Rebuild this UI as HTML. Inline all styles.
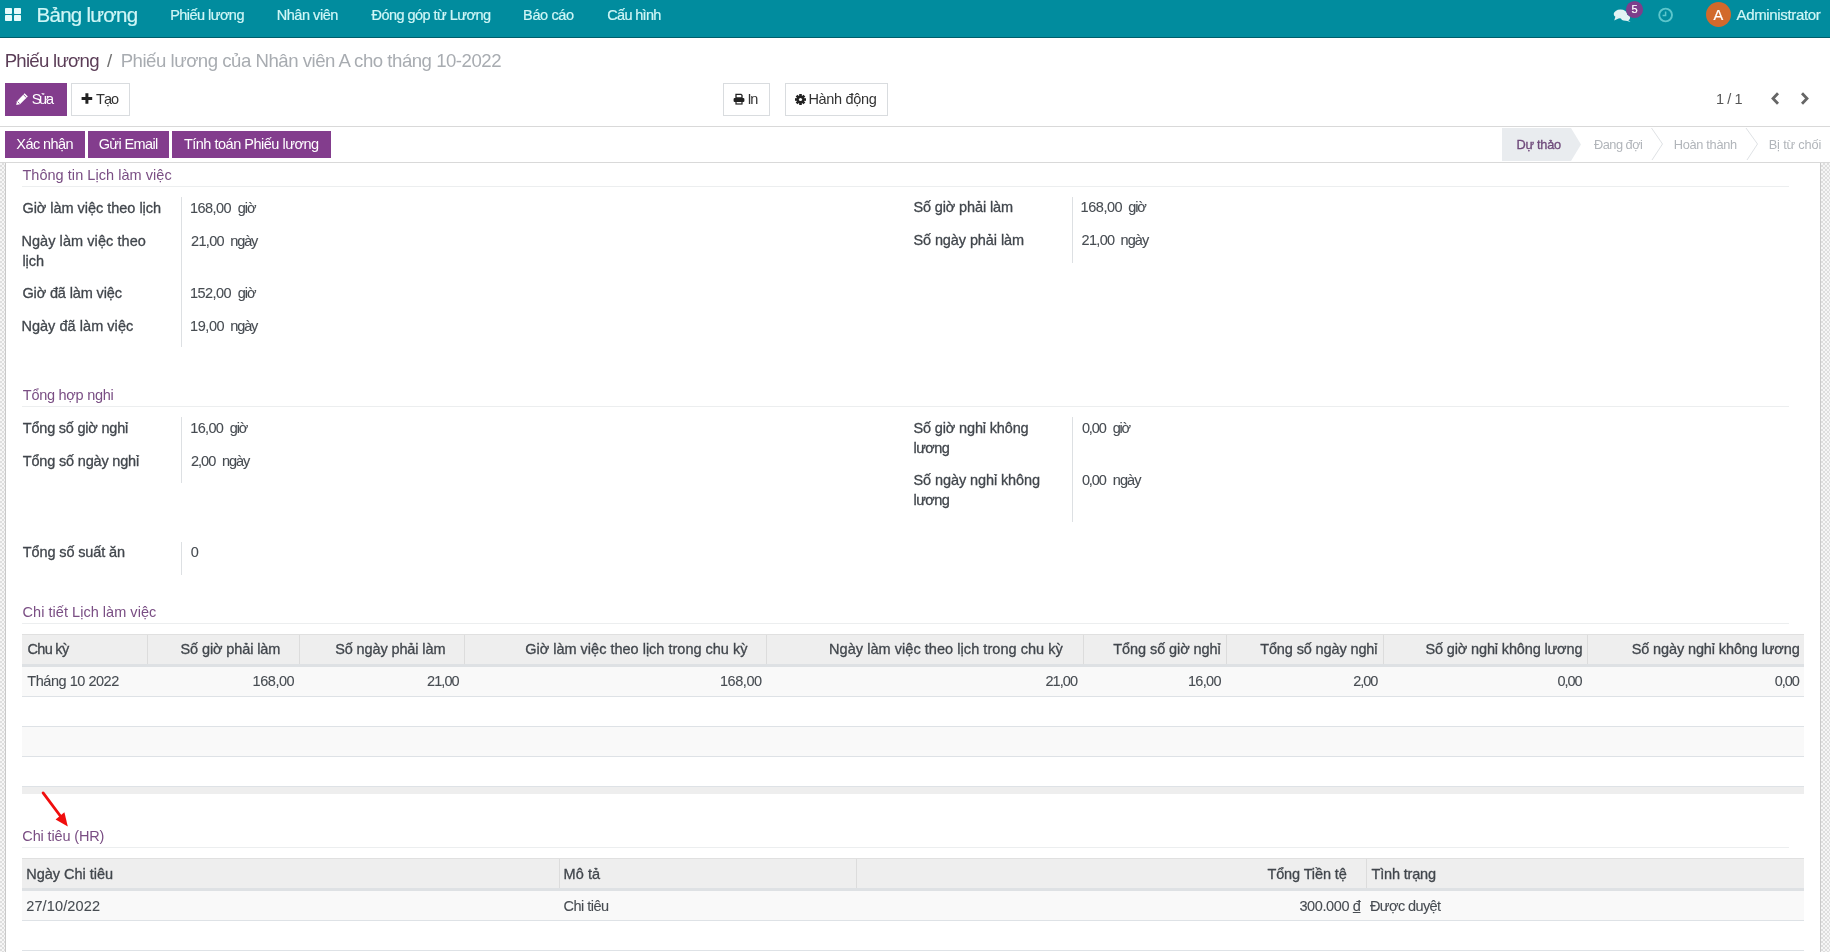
<!DOCTYPE html>
<html><head><meta charset="utf-8">
<style>
*{box-sizing:border-box;margin:0;padding:0}
html,body{width:1830px;height:952px;overflow:hidden;background:#fff;font-family:"Liberation Sans",sans-serif;font-size:14.5px;color:#4c5157}
div,svg{position:absolute}
.t,.nav,.val,.med{white-space:nowrap}
.nav{-webkit-text-stroke:0.2px currentColor}
.val{color:#474c52;-webkit-text-stroke:0.1px currentColor}
.med{color:#41464c;-webkit-text-stroke:0.3px currentColor}
.s{position:absolute}

</style></head><body>
<!-- navbar -->
<div class="s" style="left:0;top:0;width:1830px;height:38px;background:#018c9e;border-bottom:1px solid #005e6b"></div>
<svg style="left:5px;top:8px" width="16" height="13" viewBox="0 0 16 13"><g fill="#e6fbfb"><rect x="0" y="0" width="7" height="6" rx="0.7"/><rect x="9" y="0" width="7" height="6" rx="0.7"/><rect x="0" y="7" width="7" height="6" rx="0.7"/><rect x="9" y="7" width="7" height="6" rx="0.7"/></g></svg>
<svg style="left:1612px;top:0px" width="36" height="24" viewBox="0 0 36 24">
  <g fill="#e3f3f4">
    <ellipse cx="8.5" cy="14" rx="6.8" ry="4.4"/>
    <path d="M3.5 16.5 L2.2 20.5 L7.5 18 Z"/>
    <ellipse cx="13.5" cy="17.8" rx="4.6" ry="3"/>
    <path d="M15.5 19.5 L18.5 22 L13.5 20.5 Z"/>
  </g>
  <circle cx="22.5" cy="9.5" r="8.6" fill="#7d3e8b"/>
</svg>
<svg style="left:1657px;top:7px" width="17" height="17" viewBox="0 0 17 17">
  <circle cx="8.6" cy="8" r="6.4" fill="none" stroke="#5cc6cc" stroke-width="1.9"/>
  <path d="M8.6 4.6 V8.6 H5.6" fill="none" stroke="#5cc6cc" stroke-width="1.5"/>
</svg>
<div class="s" style="left:1705.5px;top:2.3px;width:25px;height:25px;border-radius:50%;background:#d2692b"></div>

<!-- toolbar buttons -->
<div class="s" style="left:5px;top:83px;width:62px;height:33px;background:#833d8d"></div>
<svg style="left:15px;top:92px" width="14" height="14" viewBox="0 0 14 14">
  <path d="M9.6 1.2 L12.8 4.4 L5 12.2 L1.2 13 L2 9.2 Z" fill="#fff"/>
  <path d="M8.3 2.5 L11.5 5.7" stroke="#833d8d" stroke-width="0.9"/>
  <path d="M2.6 9.6 L4.6 11.6" stroke="#833d8d" stroke-width="0.8"/>
</svg>
<div class="s" style="left:71px;top:83px;width:59px;height:33px;background:#fff;border:1px solid #d9dcdf"></div>
<svg style="left:81px;top:93px" width="12" height="11" viewBox="0 0 12 11">
  <path d="M4.4 0.3 H7.4 V4 H11.2 V7 H7.4 V10.7 H4.4 V7 H0.6 V4 H4.4 Z" fill="#222"/>
</svg>
<div class="s" style="left:723px;top:83px;width:47px;height:33px;background:#fff;border:1px solid #d9dcdf"></div>
<svg style="left:733px;top:93px" width="12" height="12" viewBox="0 0 12 12">
  <path d="M3 1.3 H8 L9 2.3 V5 H3 Z" fill="none" stroke="#222" stroke-width="1.3"/>
  <rect x="0.6" y="5" width="10.8" height="4" rx="1" fill="#222"/>
  <rect x="3" y="8.2" width="6" height="2.8" fill="none" stroke="#222" stroke-width="1.2"/>
</svg>
<div class="s" style="left:785px;top:83px;width:103px;height:33px;background:#fff;border:1px solid #d9dcdf"></div>
<svg style="left:795px;top:94px" width="11" height="11" viewBox="0 0 11 11">
  <g fill="#222" transform="translate(5.5 5.5)">
    <circle r="3.9"/>
    <rect x="-1.3" y="-5.5" width="2.6" height="11"/>
    <rect x="-1.3" y="-5.5" width="2.6" height="11" transform="rotate(45)"/>
    <rect x="-1.3" y="-5.5" width="2.6" height="11" transform="rotate(90)"/>
    <rect x="-1.3" y="-5.5" width="2.6" height="11" transform="rotate(135)"/>
  </g>
  <circle cx="5.5" cy="5.5" r="1.6" fill="#fff"/>
</svg>
<svg style="left:1768px;top:90px" width="44" height="17" viewBox="0 0 44 17">
  <path d="M10 3.2 L5 8.5 L10 13.8" fill="none" stroke="#666" stroke-width="2.8"/>
  <path d="M34 3.2 L39 8.5 L34 13.8" fill="none" stroke="#666" stroke-width="2.8"/>
</svg>

<div class="s" style="left:0;top:126px;width:1830px;height:1px;background:#d9d9d9"></div>
<div class="s" style="left:5px;top:131px;width:80px;height:27px;background:#833d8d"></div>
<div class="s" style="left:88px;top:131px;width:81px;height:27px;background:#833d8d"></div>
<div class="s" style="left:172px;top:131px;width:159px;height:27px;background:#833d8d"></div>
<svg style="left:1500px;top:127px" width="330" height="35" viewBox="0 0 330 35">
  <path d="M2 1 H71 L81 17.5 L71 34 H2 Z" fill="#e9ecef"/>
  <path d="M151.5 1 L162.5 17 L152 33" fill="none" stroke="#dfe2e5" stroke-width="1"/>
  <path d="M246 1 L257.5 17 L247 33" fill="none" stroke="#dfe2e5" stroke-width="1"/>
</svg>
<div class="s" style="left:0;top:162px;width:1830px;height:1px;background:#d9d9d9"></div>

<!-- sheet bg -->
<div class="s" style="left:0;top:163px;width:5px;height:789px;background:conic-gradient(#dedede 25%,#f6f6f6 0 50%,#dedede 0 75%,#f6f6f6 0) 0 0/4px 4px"></div>
<div class="s" style="left:1821px;top:163px;width:9px;height:789px;background:conic-gradient(#dedede 25%,#f6f6f6 0 50%,#dedede 0 75%,#f6f6f6 0) 0 0/4px 4px"></div>
<div class="s" style="left:5px;top:163px;width:1px;height:789px;background:#c9c9c9"></div>
<div class="s" style="left:1820px;top:163px;width:1px;height:789px;background:#c9c9c9"></div>

<!-- separators -->
<div class="s" style="left:22px;top:186px;width:1767px;height:1px;background:#eceeef"></div>
<div class="s" style="left:22px;top:406px;width:1767px;height:1px;background:#eceeef"></div>
<div class="s" style="left:22px;top:623px;width:1767px;height:1px;background:#eceeef"></div>
<div class="s" style="left:22px;top:847px;width:1767px;height:1px;background:#eceeef"></div>

<!-- field vertical borders -->
<div class="s" style="left:181px;top:197px;width:1px;height:150px;background:#dde0e3"></div>
<div class="s" style="left:1072px;top:197px;width:1px;height:66px;background:#dde0e3"></div>
<div class="s" style="left:181px;top:417px;width:1px;height:66px;background:#dde0e3"></div>
<div class="s" style="left:1072px;top:417px;width:1px;height:105px;background:#dde0e3"></div>
<div class="s" style="left:181px;top:542px;width:1px;height:33px;background:#dde0e3"></div>

<!-- table 1 -->
<div class="s" style="left:22px;top:634px;width:1782px;height:33px;background:#eeeeee;border-top:1px solid #e0e0e0;border-bottom:3px solid #dee1e4"></div>
<div class="s" style="left:147px;top:635px;width:1px;height:29px;background:#dcdcdc"></div>
<div class="s" style="left:299px;top:635px;width:1px;height:29px;background:#dcdcdc"></div>
<div class="s" style="left:464px;top:635px;width:1px;height:29px;background:#dcdcdc"></div>
<div class="s" style="left:766px;top:635px;width:1px;height:29px;background:#dcdcdc"></div>
<div class="s" style="left:1083px;top:635px;width:1px;height:29px;background:#dcdcdc"></div>
<div class="s" style="left:1226px;top:635px;width:1px;height:29px;background:#dcdcdc"></div>
<div class="s" style="left:1383px;top:635px;width:1px;height:29px;background:#dcdcdc"></div>
<div class="s" style="left:1587px;top:635px;width:1px;height:29px;background:#dcdcdc"></div>
<div class="s" style="left:22px;top:667px;width:1782px;height:29px;background:#f9f9f9"></div>
<div class="s" style="left:22px;top:696px;width:1782px;height:1px;background:#dee2e6"></div>
<div class="s" style="left:22px;top:726px;width:1782px;height:1px;background:#dee2e6"></div>
<div class="s" style="left:22px;top:727px;width:1782px;height:29px;background:#f9f9f9"></div>
<div class="s" style="left:22px;top:756px;width:1782px;height:1px;background:#dee2e6"></div>
<div class="s" style="left:22px;top:786px;width:1782px;height:8px;background:#eeeeee;border-top:1px solid #dee2e6"></div>

<!-- red arrow -->
<svg style="left:38px;top:788px" width="36" height="42" viewBox="0 0 36 42">
  <path d="M5.1 4.9 L23.5 29.5" stroke="#f00d0d" stroke-width="2.8" stroke-linecap="round" fill="none"/>
  <path d="M29.8 38.6 L17.6 31.4 L26.4 24.2 Z" fill="#f00d0d"/>
</svg>

<!-- table 2 -->
<div class="s" style="left:22px;top:858px;width:1782px;height:33px;background:#eeeeee;border-top:1px solid #e0e0e0;border-bottom:3px solid #dee1e4"></div>
<div class="s" style="left:559px;top:859px;width:1px;height:29px;background:#dcdcdc"></div>
<div class="s" style="left:856px;top:859px;width:1px;height:29px;background:#dcdcdc"></div>
<div class="s" style="left:1366px;top:859px;width:1px;height:29px;background:#dcdcdc"></div>
<div class="s" style="left:22px;top:891px;width:1782px;height:29px;background:#f9f9f9"></div>
<div class="s" style="left:22px;top:920px;width:1782px;height:1px;background:#dee2e6"></div>
<div class="s" style="left:22px;top:950px;width:1782px;height:1px;background:#dee2e6"></div>

<div id="tx" style="left:0;top:0;width:1830px;height:952px;will-change:transform">
<div class="nav" style="left:36.60px;top:0.30px;font-size:20.5px;line-height:29px;letter-spacing:-0.733px;color:#cff6f6;">Bảng lương</div>
<div class="nav" style="left:170.20px;top:4.68px;font-size:14.5px;line-height:20px;letter-spacing:-0.541px;color:#cff6f6;">Phiếu lương</div>
<div class="nav" style="left:276.70px;top:4.68px;font-size:14.5px;line-height:20px;letter-spacing:-0.454px;color:#cff6f6;">Nhân viên</div>
<div class="nav" style="left:371.50px;top:4.68px;font-size:14.5px;line-height:20px;letter-spacing:-0.533px;color:#cff6f6;">Đóng góp từ Lương</div>
<div class="nav" style="left:523.10px;top:4.68px;font-size:14.5px;line-height:20px;letter-spacing:-0.374px;color:#cff6f6;">Báo cáo</div>
<div class="nav" style="left:607.20px;top:4.68px;font-size:14.5px;line-height:20px;letter-spacing:-0.669px;color:#cff6f6;">Cấu hình</div>
<div class="nav" style="left:1736.60px;top:4.20px;font-size:15px;line-height:21px;letter-spacing:-0.355px;color:#cff6f6;">Administrator</div>
<div class="nav" style="left:1713.50px;top:4.88px;font-size:14.5px;line-height:20px;color:#fff;">A</div>
<div class="nav" style="left:1631.50px;top:2.29px;font-size:11px;line-height:15px;color:#fff;">5</div>
<div class="t" style="left:4.70px;top:48.36px;font-size:18.6px;line-height:26px;letter-spacing:-0.733px;color:#5b3d57;">Phiếu lương</div>
<div class="t" style="left:107.00px;top:48.36px;font-size:18.6px;line-height:26px;color:#707070;">/</div>
<div class="t" style="left:120.70px;top:48.36px;font-size:18.6px;line-height:26px;letter-spacing:-0.481px;color:#a8acb1;">Phiếu lương của Nhân viên A cho tháng 10-2022</div>
<div class="t" style="left:31.80px;top:89.08px;font-size:14.5px;line-height:20px;letter-spacing:-2.539px;color:#fff;">Sửa</div>
<div class="t" style="left:96.00px;top:88.98px;font-size:14.5px;line-height:20px;letter-spacing:-0.961px;color:#333;">Tạo</div>
<div class="t" style="left:747.40px;top:88.88px;font-size:14.5px;line-height:20px;letter-spacing:-1.129px;color:#333;">In</div>
<div class="t" style="left:808.40px;top:88.88px;font-size:14.5px;line-height:20px;letter-spacing:-0.323px;color:#333;">Hành động</div>
<div class="t" style="left:1715.90px;top:88.78px;font-size:14.5px;line-height:20px;letter-spacing:-0.387px;color:#555;">1 / 1</div>
<div class="t" style="left:16.30px;top:133.78px;font-size:14.5px;line-height:20px;letter-spacing:-0.572px;color:#fff;">Xác nhận</div>
<div class="t" style="left:98.70px;top:133.78px;font-size:14.5px;line-height:20px;letter-spacing:-0.621px;color:#fff;">Gửi Email</div>
<div class="t" style="left:183.90px;top:133.78px;font-size:14.5px;line-height:20px;letter-spacing:-0.490px;color:#fff;">Tính toán Phiếu lương</div>
<div class="med" style="left:1516.50px;top:135.86px;font-size:12.8px;line-height:18px;letter-spacing:-0.275px;color:#6f4a7b;">Dự thảo</div>
<div class="t" style="left:1594.00px;top:135.86px;font-size:12.8px;line-height:18px;letter-spacing:-0.522px;color:#b1b5ba;">Đang đợi</div>
<div class="t" style="left:1673.75px;top:135.86px;font-size:12.8px;line-height:18px;letter-spacing:-0.312px;color:#b1b5ba;">Hoàn thành</div>
<div class="t" style="left:1768.70px;top:135.86px;font-size:12.8px;line-height:18px;letter-spacing:-0.160px;color:#b1b5ba;">Bị từ chối</div>
<div class="t" style="left:22.40px;top:165.18px;font-size:14.5px;line-height:20px;letter-spacing:0.044px;color:#7a4e84;">Thông tin Lịch làm việc</div>
<div class="t" style="left:22.80px;top:385.28px;font-size:14.5px;line-height:20px;letter-spacing:-0.261px;color:#7a4e84;">Tổng hợp nghi</div>
<div class="t" style="left:22.60px;top:601.78px;font-size:14.5px;line-height:20px;letter-spacing:0.033px;color:#7a4e84;">Chi tiết Lịch làm việc</div>
<div class="t" style="left:22.30px;top:825.68px;font-size:14.5px;line-height:20px;letter-spacing:-0.139px;color:#7a4e84;">Chi tiêu (HR)</div>
<div class="med" style="left:22.40px;top:197.78px;font-size:14.5px;line-height:20px;letter-spacing:-0.028px;">Giờ làm việc theo lịch</div>
<div class="med" style="left:21.40px;top:230.78px;font-size:14.5px;line-height:20px;letter-spacing:0.068px;">Ngày làm việc theo</div>
<div class="med" style="left:22.40px;top:251.38px;font-size:14.5px;line-height:20px;">lịch</div>
<div class="med" style="left:22.40px;top:282.68px;font-size:14.5px;line-height:20px;letter-spacing:-0.130px;">Giờ đã làm việc</div>
<div class="med" style="left:21.40px;top:315.88px;font-size:14.5px;line-height:20px;letter-spacing:0.042px;">Ngày đã làm việc</div>
<div class="val" style="left:190.00px;top:197.78px;font-size:14.5px;line-height:20px;letter-spacing:-0.557px;">168,00</div>
<div class="val" style="left:237.80px;top:197.78px;font-size:14.5px;line-height:20px;letter-spacing:-1.093px;">giờ</div>
<div class="val" style="left:191.00px;top:230.78px;font-size:14.5px;line-height:20px;letter-spacing:-0.655px;">21,00</div>
<div class="val" style="left:230.30px;top:230.78px;font-size:14.5px;line-height:20px;letter-spacing:-1.131px;">ngày</div>
<div class="val" style="left:190.00px;top:282.68px;font-size:14.5px;line-height:20px;letter-spacing:-0.557px;">152,00</div>
<div class="val" style="left:237.80px;top:282.68px;font-size:14.5px;line-height:20px;letter-spacing:-1.093px;">giờ</div>
<div class="val" style="left:190.00px;top:315.88px;font-size:14.5px;line-height:20px;letter-spacing:-0.405px;">19,00</div>
<div class="val" style="left:230.30px;top:315.88px;font-size:14.5px;line-height:20px;letter-spacing:-1.131px;">ngày</div>
<div class="med" style="left:913.40px;top:197.28px;font-size:14.5px;line-height:20px;letter-spacing:-0.123px;">Số giờ phải làm</div>
<div class="med" style="left:913.40px;top:229.68px;font-size:14.5px;line-height:20px;letter-spacing:-0.091px;">Số ngày phải làm</div>
<div class="val" style="left:1080.60px;top:197.28px;font-size:14.5px;line-height:20px;letter-spacing:-0.457px;">168,00</div>
<div class="val" style="left:1128.30px;top:197.28px;font-size:14.5px;line-height:20px;letter-spacing:-1.143px;">giờ</div>
<div class="val" style="left:1081.60px;top:229.68px;font-size:14.5px;line-height:20px;letter-spacing:-0.705px;">21,00</div>
<div class="val" style="left:1120.60px;top:229.68px;font-size:14.5px;line-height:20px;letter-spacing:-0.931px;">ngày</div>
<div class="med" style="left:22.80px;top:417.88px;font-size:14.5px;line-height:20px;letter-spacing:-0.216px;">Tổng số giờ nghỉ</div>
<div class="med" style="left:22.80px;top:450.58px;font-size:14.5px;line-height:20px;letter-spacing:-0.180px;">Tổng số ngày nghỉ</div>
<div class="val" style="left:190.30px;top:417.58px;font-size:14.5px;line-height:20px;letter-spacing:-0.680px;">16,00</div>
<div class="val" style="left:229.80px;top:417.58px;font-size:14.5px;line-height:20px;letter-spacing:-1.193px;">giờ</div>
<div class="val" style="left:191.00px;top:450.68px;font-size:14.5px;line-height:20px;letter-spacing:-0.986px;">2,00</div>
<div class="val" style="left:221.90px;top:450.68px;font-size:14.5px;line-height:20px;letter-spacing:-1.064px;">ngày</div>
<div class="med" style="left:913.50px;top:417.68px;font-size:14.5px;line-height:20px;letter-spacing:-0.148px;">Số giờ nghỉ không</div>
<div class="med" style="left:913.50px;top:438.28px;font-size:14.5px;line-height:20px;letter-spacing:-0.575px;">lương</div>
<div class="med" style="left:913.50px;top:469.58px;font-size:14.5px;line-height:20px;letter-spacing:-0.095px;">Số ngày nghỉ không</div>
<div class="med" style="left:913.50px;top:490.18px;font-size:14.5px;line-height:20px;letter-spacing:-0.575px;">lương</div>
<div class="val" style="left:1081.90px;top:417.68px;font-size:14.5px;line-height:20px;letter-spacing:-1.119px;">0,00</div>
<div class="val" style="left:1112.70px;top:417.68px;font-size:14.5px;line-height:20px;letter-spacing:-1.193px;">giờ</div>
<div class="val" style="left:1081.90px;top:469.58px;font-size:14.5px;line-height:20px;letter-spacing:-1.119px;">0,00</div>
<div class="val" style="left:1112.70px;top:469.58px;font-size:14.5px;line-height:20px;letter-spacing:-0.864px;">ngày</div>
<div class="med" style="left:22.80px;top:542.48px;font-size:14.5px;line-height:20px;letter-spacing:-0.123px;">Tổng số suất ăn</div>
<div class="val" style="left:190.80px;top:542.48px;font-size:14.5px;line-height:20px;">0</div>
<div class="med" style="left:27.60px;top:638.78px;font-size:14.5px;line-height:20px;letter-spacing:-0.716px;">Chu kỳ</div>
<div class="med" style="left:180.50px;top:638.78px;font-size:14.5px;line-height:20px;letter-spacing:-0.108px;">Số giờ phải làm</div>
<div class="med" style="left:335.20px;top:638.78px;font-size:14.5px;line-height:20px;letter-spacing:-0.118px;">Số ngày phải làm</div>
<div class="med" style="left:525.20px;top:638.78px;font-size:14.5px;line-height:20px;">Giờ làm việc theo lịch trong chu kỳ</div>
<div class="med" style="left:829.00px;top:638.78px;font-size:14.5px;line-height:20px;letter-spacing:0.050px;">Ngày làm việc theo lịch trong chu kỳ</div>
<div class="med" style="left:1113.30px;top:638.78px;font-size:14.5px;line-height:20px;letter-spacing:-0.082px;">Tổng số giờ nghỉ</div>
<div class="med" style="left:1260.20px;top:638.78px;font-size:14.5px;line-height:20px;letter-spacing:-0.124px;">Tổng số ngày nghỉ</div>
<div class="med" style="left:1425.50px;top:638.78px;font-size:14.5px;line-height:20px;letter-spacing:-0.144px;">Số giờ nghỉ không lương</div>
<div class="med" style="left:1631.70px;top:638.78px;font-size:14.5px;line-height:20px;letter-spacing:-0.118px;">Số ngày nghỉ không lương</div>
<div class="val" style="left:27.30px;top:670.58px;font-size:14.5px;line-height:20px;letter-spacing:-0.466px;">Tháng 10 2022</div>
<div class="val" style="left:252.60px;top:670.58px;font-size:14.5px;line-height:20px;letter-spacing:-0.457px;">168,00</div>
<div class="val" style="left:427.00px;top:670.58px;font-size:14.5px;line-height:20px;letter-spacing:-0.905px;">21,00</div>
<div class="val" style="left:720.00px;top:670.58px;font-size:14.5px;line-height:20px;letter-spacing:-0.457px;">168,00</div>
<div class="val" style="left:1045.40px;top:670.58px;font-size:14.5px;line-height:20px;letter-spacing:-0.905px;">21,00</div>
<div class="val" style="left:1187.90px;top:670.58px;font-size:14.5px;line-height:20px;letter-spacing:-0.655px;">16,00</div>
<div class="val" style="left:1353.30px;top:670.58px;font-size:14.5px;line-height:20px;letter-spacing:-1.052px;">2,00</div>
<div class="val" style="left:1557.40px;top:670.58px;font-size:14.5px;line-height:20px;letter-spacing:-1.052px;">0,00</div>
<div class="val" style="left:1774.70px;top:670.58px;font-size:14.5px;line-height:20px;letter-spacing:-1.052px;">0,00</div>
<div class="med" style="left:26.20px;top:863.58px;font-size:14.5px;line-height:20px;letter-spacing:-0.015px;">Ngày Chi tiêu</div>
<div class="med" style="left:563.50px;top:863.58px;font-size:14.5px;line-height:20px;letter-spacing:0.075px;">Mô tả</div>
<div class="med" style="left:1267.40px;top:863.58px;font-size:14.5px;line-height:20px;letter-spacing:-0.109px;">Tổng Tiền tệ</div>
<div class="med" style="left:1371.50px;top:863.58px;font-size:14.5px;line-height:20px;letter-spacing:-0.170px;">Tình trạng</div>
<div class="val" style="left:26.20px;top:895.58px;font-size:14.5px;line-height:20px;letter-spacing:0.144px;">27/10/2022</div>
<div class="val" style="left:563.60px;top:895.58px;font-size:14.5px;line-height:20px;letter-spacing:-0.514px;">Chi tiêu</div>
<div class="val" style="left:1299.40px;top:895.58px;font-size:14.5px;line-height:20px;letter-spacing:-0.380px;">300.000 <span style="text-decoration:underline;text-decoration-thickness:1px;text-underline-offset:1px">đ</span></div>
<div class="val" style="left:1370.00px;top:895.58px;font-size:14.5px;line-height:20px;letter-spacing:-0.601px;">Được duyệt</div>
</div>
</body></html>
